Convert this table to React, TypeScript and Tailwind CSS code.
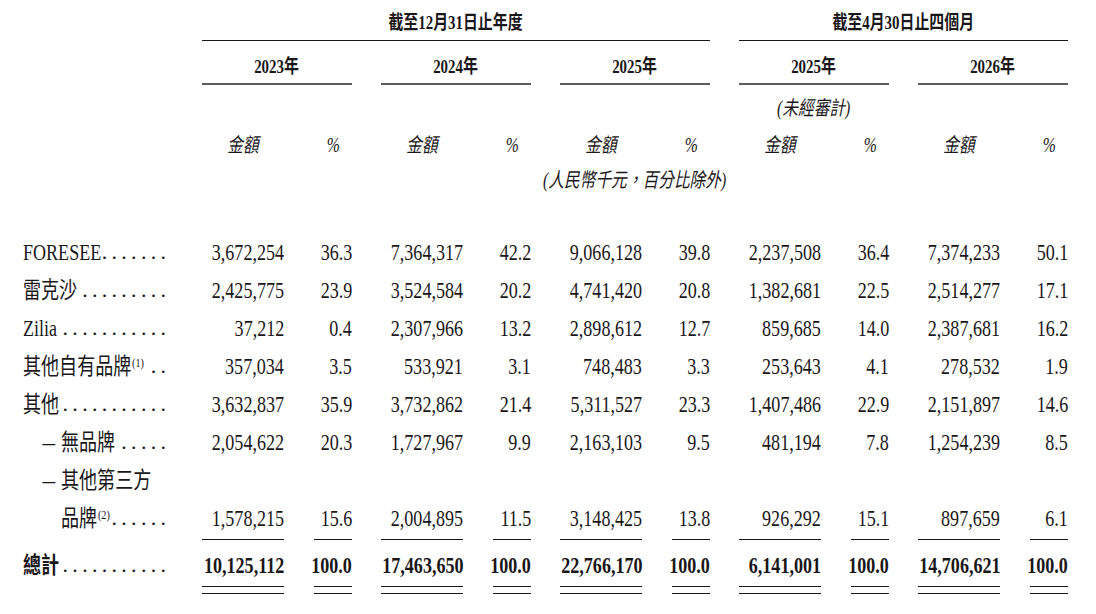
import React from 'react';

type Origin = 'origin-right' | 'origin-left' | 'origin-center';

function S({ children, o, className = '' }: { children: React.ReactNode; o: Origin; className?: string }) {
  return <span className={`inline-block whitespace-nowrap scale-x-[0.785] ${o} ${className}`}>{children}</span>;
}

type Row = {
  label: string;
  sup?: string;
  dash?: boolean;
  indent?: boolean;
  dots: number;
  v: [string, string][] | null;
};

const rows: Row[] = [
  { label: 'FORESEE', dots: 7, v: [['3,672,254', '36.3'], ['7,364,317', '42.2'], ['9,066,128', '39.8'], ['2,237,508', '36.4'], ['7,374,233', '50.1']] },
  { label: '雷克沙', dots: 9, v: [['2,425,775', '23.9'], ['3,524,584', '20.2'], ['4,741,420', '20.8'], ['1,382,681', '22.5'], ['2,514,277', '17.1']] },
  { label: 'Zilia', dots: 11, v: [['37,212', '0.4'], ['2,307,966', '13.2'], ['2,898,612', '12.7'], ['859,685', '14.0'], ['2,387,681', '16.2']] },
  { label: '其他自有品牌', sup: '(1)', dots: 2, v: [['357,034', '3.5'], ['533,921', '3.1'], ['748,483', '3.3'], ['253,643', '4.1'], ['278,532', '1.9']] },
  { label: '其他', dots: 11, v: [['3,632,837', '35.9'], ['3,732,862', '21.4'], ['5,311,527', '23.3'], ['1,407,486', '22.9'], ['2,151,897', '14.6']] },
  { label: '無品牌', dash: true, dots: 5, v: [['2,054,622', '20.3'], ['1,727,967', '9.9'], ['2,163,103', '9.5'], ['481,194', '7.8'], ['1,254,239', '8.5']] },
  { label: '其他第三方', dash: true, dots: 0, v: null },
  { label: '品牌', sup: '(2)', indent: true, dots: 6, v: [['1,578,215', '15.6'], ['2,004,895', '11.5'], ['3,148,425', '13.8'], ['926,292', '15.1'], ['897,659', '6.1']] },
];

const totals: [string, string][] = [
  ['10,125,112', '100.0'],
  ['17,463,650', '100.0'],
  ['22,766,170', '100.0'],
  ['6,141,001', '100.0'],
  ['14,706,621', '100.0'],
];

function Dots({ n }: { n: number }) {
  return (
    <div className="flex shrink-0 text-[22px] leading-none">
      {Array.from({ length: n }).map((_, i) => (
        <span key={i} className="w-[9.8px] text-right">.</span>
      ))}
    </div>
  );
}

function LabelCell({ r }: { r: Row }) {
  return (
    <div className="flex w-[202px] items-center pr-[36px] pl-[23px] text-[23px] leading-none">
      <div className="flex min-w-0 flex-1 items-center">
        {r.dash && <span className="ml-[20px] mr-[6px] shrink-0 scale-x-110">–</span>}
        {r.indent && <span className="w-[38px] shrink-0" />}
        <S o="origin-left">
          {r.label}
          {r.sup && <span className="relative -top-[7px] ml-[1px] text-[13px]">{r.sup}</span>}
        </S>
      </div>
      {r.dots > 0 && <Dots n={r.dots} />}
    </div>
  );
}

export default function App() {
  return (
    <div className="h-[614px] w-[1096px] overflow-hidden bg-white font-['Liberation_Serif','Noto_Sans_CJK_TC',serif] text-[#1a1718]">
      {/* Period titles */}
      <div className="flex h-[41px] gap-[29px]">
        <div className="w-[173px]" />
        <div className="flex w-[508px] items-center justify-center border-b border-[#1a1718] pt-[4px] text-[19px] leading-none font-bold">
          <S o="origin-center">截至12月31日止年度</S>
        </div>
        <div className="flex w-[329px] items-center justify-center border-b border-[#1a1718] pt-[4px] text-[19px] leading-none font-bold">
          <S o="origin-center">截至4月30日止四個月</S>
        </div>
      </div>

      {/* Years */}
      <div className="flex h-[44px] gap-[29px]">
        <div className="w-[173px]" />
        {['2023年', '2024年', '2025年', '2025年', '2026年'].map((y, i) => (
          <div key={i} className="flex w-[150px] items-center justify-center border-b-2 border-[#5c5c5c] pt-[8px] text-[19px] leading-none font-bold">
            <S o="origin-center">{y}</S>
          </div>
        ))}
      </div>

      {/* Unaudited */}
      <div className="flex h-[46px] gap-[29px] italic">
        <div className="w-[173px]" />
        {[0, 1, 2, 3, 4].map((i) => (
          <div key={i} className="flex w-[150px] items-center justify-center text-[20px] leading-none">
            {i === 3 && <S o="origin-center">(未經審計)</S>}
          </div>
        ))}
      </div>

      {/* Amount / % */}
      <div className="flex h-[28px] gap-[29px] italic">
        <div className="w-[173px]" />
        {[0, 1, 2, 3, 4].map((i) => (
          <div key={i} className="flex w-[150px] items-center justify-between text-[20px] leading-none">
            <div className="flex w-[82px] justify-center">
              <S o="origin-center">金額</S>
            </div>
            <div className="flex w-[38px] justify-center">
              <S o="origin-center">%</S>
            </div>
          </div>
        ))}
      </div>

      {/* Units */}
      <div className="flex h-[42px] gap-[29px] italic">
        <div className="w-[173px]" />
        {[0, 1, 2, 3, 4].map((i) => (
          <div key={i} className="flex w-[150px] items-center justify-center text-[20px] leading-none">
            {i === 2 && <S o="origin-center">(人民幣千元，百分比除外)</S>}
          </div>
        ))}
      </div>

      <div className="h-[32px]" />

      {/* Data rows */}
      {rows.map((r, ri) => (
        <div key={ri} className="flex h-[38px] items-center">
          <LabelCell r={r} />
          <div className="flex gap-[29px] text-[23px] leading-none">
            {[0, 1, 2, 3, 4].map((gi) => (
              <div key={gi} className="flex w-[150px] justify-between">
                <div className="flex w-[82px] justify-end">
                  {r.v && <S o="origin-right">{r.v[gi][0]}</S>}
                </div>
                <div className="flex w-[38px] justify-end">
                  {r.v && <S o="origin-right">{r.v[gi][1]}</S>}
                </div>
              </div>
            ))}
          </div>
        </div>
      ))}

      {/* Total */}
      <div className="mt-[2px] flex">
        <div className="flex h-[47px] w-[202px] items-center pt-[5px] pr-[36px] pl-[23px] text-[23px] leading-none">
          <div className="flex min-w-0 flex-1 items-center">
            <S o="origin-left" className="font-bold">總計</S>
          </div>
          <Dots n={11} />
        </div>
        <div className="flex gap-[29px] text-[23px] leading-none font-bold">
          {totals.map((t, gi) => (
            <div key={gi} className="flex w-[150px] justify-between">
              {[0, 1].map((k) => (
                <div key={k} className={k === 0 ? 'flex w-[82px] flex-col' : 'flex w-[38px] flex-col'}>
                  <div className="flex h-[47px] items-center justify-end border-t border-[#1a1718] pt-[4px]">
                    <S o="origin-right">{t[k]}</S>
                  </div>
                  <div className="h-[8px] border-y border-[#1a1718]" />
                </div>
              ))}
            </div>
          ))}
        </div>
      </div>
    </div>
  );
}
